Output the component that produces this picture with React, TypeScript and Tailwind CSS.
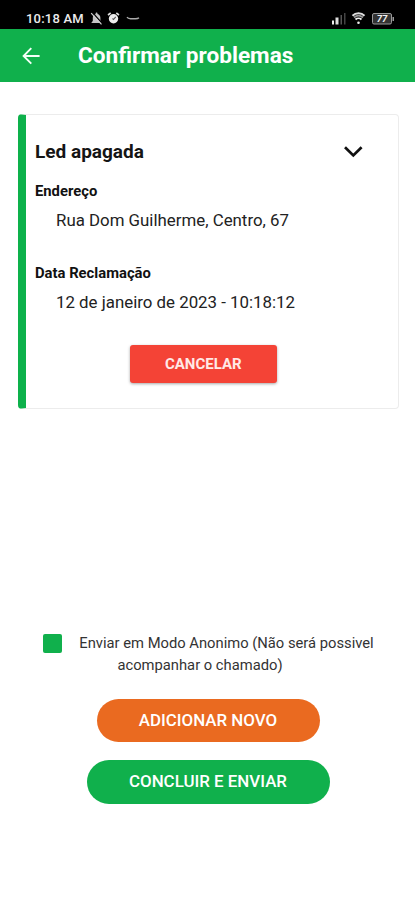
function StatusBar() {
  return (
    <div className="flex h-[29px] items-center justify-between bg-black pl-[26px] pr-[20px] pt-[8px] text-white">
      <div className="flex items-center">
        <span className="w-[59px] whitespace-nowrap text-[13px] font-medium leading-none tracking-[0.2px] text-[#ececec]">
          10:18 AM
        </span>
        <svg className="ml-[5px] h-[13px] w-[13px]" viewBox="0 0 13 13">
          <path d="M6.500 .6c.6 0 1 .4 1 1v.4c1.900.5 2.900 2 2.900 3.900v3.200l1.300 1.400v.5H1.500v-.5l1.300-1.400V5.900c0-1.900 1-3.400 2.800-3.900v-.4c0-.6.300-1 .9-1z" fill="#c4c4c4" />
          <path d="M2.600 .6l9.800 11.200" stroke="#000" strokeWidth="1.300" />
          <path d="M1.200 1.200l10.300 11.100" stroke="#cfcfcf" strokeWidth="1.200" />
        </svg>
        <svg className="ml-[4px] h-[13px] w-[13px]" viewBox="0 0 13 13">
          <circle cx="6.500" cy="6.700" r="4.700" fill="#eee" />
          <path d="M1 3L3.700 1M12 3L9.300 1" stroke="#ddd" strokeWidth="1.600" />
          <path d="M5.500 6.500l1 1 2.200-2.600" stroke="#555" strokeWidth="1.100" fill="none" />
        </svg>
        <svg className="ml-[6px] h-[13px] w-[14px]" viewBox="0 0 14 13">
          <path d="M1 5.200c.8 1.300 2 1.500 3.500 1.500h5c1.500 0 2.500-.1 3.500-1" stroke="#aaa" strokeWidth="1.400" fill="none" />
        </svg>
      </div>
      <div className="flex items-center">
        <svg className="h-[14px] w-[16px]" viewBox="0 0 16 14">
          <rect x="1" y="8.500" width="2" height="4" fill="#eee" />
          <rect x="4.500" y="5.500" width="3" height="7" fill="#ddd" />
          <rect x="9.500" y="3" width="1.500" height="9.500" fill="#555" />
          <rect x="13" y="1" width="1.500" height="11.500" fill="#444" />
        </svg>
        <svg className="ml-[4px] h-[14px] w-[15px]" viewBox="0 0 15 14">
          <path d="M1.500 3.700C4.800 .3 10.200 .3 13.500 3.700" stroke="#ddd" strokeWidth="2" fill="none" />
          <path d="M3 5.500C5.800 3.100 9.200 3.100 12 5.500" stroke="#999" strokeWidth="1.800" fill="none" />
          <path d="M4.500 7.500c1.700-1.600 4.300-1.600 6 0" stroke="#eee" strokeWidth="1.800" fill="none" />
          <circle cx="7.500" cy="10.800" r="1.300" fill="#eee" />
        </svg>
        <svg className="ml-[4px] h-[14px] w-[25px]" viewBox="0 0 25 14">
          <rect x="2.500" y="1.500" width="19" height="10.500" rx="1.500" fill="#333" stroke="#999" />
          <rect x="22.500" y="5" width="1.500" height="4" fill="#999" />
          <text x="12" y="10.200" textAnchor="middle" fill="#f2f2f2" className="font-['Roboto'] text-[9.5px] font-bold italic">
            77
          </text>
        </svg>
      </div>
    </div>
  );
}

function Header() {
  return (
    <header className="flex h-[53px] items-center bg-[#10b04c] pl-[22px] text-white">
      <svg className="h-[18px] w-[18px]" viewBox="0 0 18 18" fill="none" stroke="#f4fff8" strokeWidth="1.900">
        <path d="M17.600 9H2M9.300 1.200L1.600 9l7.700 7.700" />
      </svg>
      <h1 className="ml-[38px] whitespace-nowrap pt-[2px] text-[22.6px] font-bold leading-none">Confirmar problemas</h1>
    </header>
  );
}

function Field({ label, value }: { label: string; value: string }) {
  return (
    <div>
      <div className="text-[14.8px] font-bold leading-[20px] text-[#111]">{label}</div>
      <div className="mt-[7px] whitespace-nowrap pl-[21px] text-[16.85px] leading-[24px] text-[#222]">{value}</div>
    </div>
  );
}

function ProblemCard() {
  return (
    <section className="ml-[18px] mr-[16px] mt-[32px] h-[295px] rounded border border-l-8 border-[#ececec] border-l-[#0db14b] bg-white pl-[9px] pt-[25px]">
      <div className="flex items-center justify-between pr-[35px]">
        <h2 className="text-[19px] font-bold leading-[24px] text-[#151515]">Led apagada</h2>
        <svg className="h-[12px] w-[20px]" viewBox="0 0 20 12" fill="none" stroke="#111" strokeWidth="2.700">
          <path d="M2 1.200l8.300 8.200 8.300-8.200" />
        </svg>
      </div>
      <div className="mt-[17px] flex flex-col gap-[31px]">
        <Field label="Endereço" value="Rua Dom Guilherme, Centro, 67" />
        <Field label="Data Reclamação" value="12 de janeiro de 2023 - 10:18:12" />
      </div>
      <button className="ml-[94.5px] mt-[31px] block h-[38px] w-[147.5px] rounded-[3px] bg-[#f44336] text-[15px] font-bold text-[#ffe9e6] shadow-[0_1px_3px_rgba(0,0,0,0.35)]">
        CANCELAR
      </button>
    </section>
  );
}

export default function App() {
  return (
    <div className="h-[900px] w-[415px] overflow-hidden bg-white font-['Roboto','Liberation_Sans',sans-serif]">
      <StatusBar />
      <Header />
      <ProblemCard />
      <div className="mt-[223px] flex items-start pl-[43px]">
        <div className="mt-[2px] h-[19px] w-[19px] rounded-[2px] bg-[#10b04c]" />
        <p className="ml-[16px] w-[297px] whitespace-nowrap text-center text-[14.75px] leading-[22px] text-[#333]">
          Enviar em Modo Anonimo (Não será possivel
          <span className="block pr-[53px]">acompanhar o chamado)</span>
        </p>
      </div>
      <div className="mt-[23px] flex flex-col items-center gap-[18px] pl-px text-[16.9px] font-medium text-white">
        <button className="h-[43px] w-[223px] rounded-full bg-[#ea6a20]">ADICIONAR NOVO</button>
        <button className="h-[44px] w-[243px] rounded-full bg-[#10b04c]">CONCLUIR E ENVIAR</button>
      </div>
    </div>
  );
}
